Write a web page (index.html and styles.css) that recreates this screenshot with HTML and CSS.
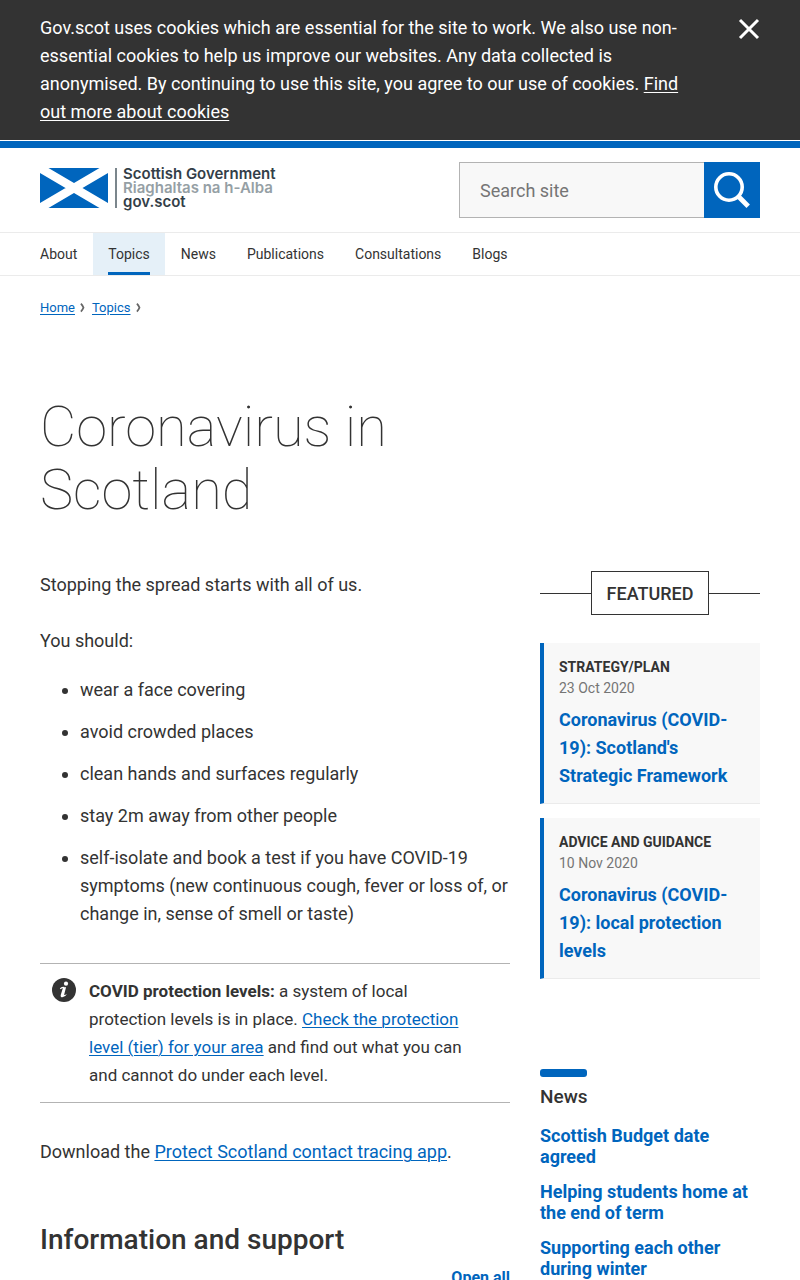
FILE: index.html
```html
<!DOCTYPE html>
<html lang="en">
<head>
<meta charset="utf-8">
<meta name="viewport" content="width=device-width, initial-scale=1">
<title>Coronavirus in Scotland - gov.scot</title>
<link rel="stylesheet" href="styles.css">
</head>
<body>
<div class="cookie-notice">
  <div class="wrapper cookie-inner">
    <p class="cookie-text">Gov.scot uses cookies which are essential for the site to work. We also use non-essential cookies to help us improve our websites. Any data collected is anonymised. By continuing to use this site, you agree to our use of cookies. <a href="#cookies">Find out more about cookies</a></p>
    <button class="cookie-close" type="button" aria-label="Close cookie notice">
      <svg width="22" height="22" viewBox="0 0 22 22" aria-hidden="true"><path d="M2 2L20 20M20 2L2 20" stroke="#fff" stroke-width="3" fill="none"/></svg>
    </button>
  </div>
</div>
<header class="site-header">
  <div class="wrapper header-inner">
    <a class="logo" href="#home">
      <svg class="flag" width="68" height="40" viewBox="0 0 68 40" aria-hidden="true">
        <rect width="68" height="40" fill="#0065bd"/>
        <path d="M0 0L68 40M68 0L0 40" stroke="#fff" stroke-width="8.6"/>
      </svg>
      <span class="logo-text">
        <span>Scottish Government</span>
        <span class="gaelic">Riaghaltas na h-Alba</span>
        <span>gov.scot</span>
      </span>
    </a>
    <form class="search" role="search">
      <input class="search-input" type="search" placeholder="Search site" aria-label="Search site">
      <button class="search-button" type="submit" aria-label="Search">
        <svg width="56" height="56" viewBox="0 0 56 56" aria-hidden="true"><circle cx="25" cy="25" r="13.2" fill="none" stroke="#fff" stroke-width="3.6"/><path d="M34 34L44.2 44.2" stroke="#fff" stroke-width="4.8"/></svg>
      </button>
    </form>
  </div>
  <nav class="main-nav" aria-label="Main">
    <ul class="wrapper nav-list">
      <li><a href="#about">About</a></li>
      <li><a class="current" href="#topics"><span>Topics</span></a></li>
      <li><a href="#news">News</a></li>
      <li><a href="#publications">Publications</a></li>
      <li><a href="#consultations">Consultations</a></li>
      <li><a href="#blogs">Blogs</a></li>
    </ul>
  </nav>
</header>
<div class="wrapper">
  <nav aria-label="Breadcrumb">
    <ol class="breadcrumbs">
      <li><a href="#home">Home</a><svg width="5" height="10" viewBox="0 0 5 10" aria-hidden="true"><path d="M0.9 0.7Q2.4 2.2 3.5 4.7Q2.4 7.2 0.9 8.7" fill="none" stroke="#666" stroke-width="1.7"/></svg></li>
      <li><a href="#topics">Topics</a><svg width="5" height="10" viewBox="0 0 5 10" aria-hidden="true"><path d="M0.9 0.7Q2.4 2.2 3.5 4.7Q2.4 7.2 0.9 8.7" fill="none" stroke="#666" stroke-width="1.7"/></svg></li>
    </ol>
  </nav>
  <div class="layout">
    <h1>Coronavirus in Scotland</h1>
    <main class="content">
      <p>Stopping the spread starts with all of us.</p>
      <p>You should:</p>
      <ul class="advice">
        <li>wear a face covering</li>
        <li>avoid crowded places</li>
        <li>clean hands and surfaces regularly</li>
        <li>stay 2m away from other people</li>
        <li>self-isolate and book a test if you have COVID-19 symptoms (new continuous cough, fever or loss of, or change in, sense of smell or taste)</li>
      </ul>
      <div class="info-note">
        <svg class="info-icon" width="24" height="24" viewBox="0 0 24 24" aria-hidden="true"><circle cx="12" cy="12" r="12" fill="#333"/><circle cx="14" cy="5.7" r="2.1" fill="#fff"/><path d="M8.2 10.7C9.8 9.6 11.4 9.3 12.6 9.5" fill="none" stroke="#fff" stroke-width="1.2"/><path d="M10.9 10L14.1 9L12.2 16.4Q12 17.6 15 16Q13 19.3 10.4 19.3Q8.1 19.2 8.8 16.7Z" fill="#fff"/></svg>
        <p><strong>COVID protection levels:</strong> a system of local protection levels is in place. <a href="#levels">Check the protection level (tier) for your area</a> and find out what you can and cannot do under each level.</p>
      </div>
      <p class="download">Download the <a href="#app">Protect Scotland contact tracing app</a>.</p>
      <h2>Information and support</h2>
      <button class="open-all" type="button">Open all</button>
    </main>
    <aside class="sidebar">
      <h2 class="featured-title"><span>Featured</span></h2>
      <article class="card">
        <p class="card-type">Strategy/plan</p>
        <p class="card-date">23 Oct 2020</p>
        <h3><a href="#framework">Coronavirus (COVID-19): Scotland's Strategic Framework</a></h3>
      </article>
      <article class="card">
        <p class="card-type">Advice and guidance</p>
        <p class="card-date">10 Nov 2020</p>
        <h3><a href="#local">Coronavirus (COVID-19): local protection levels</a></h3>
      </article>
      <section class="news">
        <h2>News</h2>
        <ul>
          <li><a href="#budget">Scottish Budget date agreed</a></li>
          <li><a href="#students">Helping students home at the end of term</a></li>
          <li><a href="#winter">Supporting each other during winter</a></li>
        </ul>
      </section>
    </aside>
  </div>
</div>
</body>
</html>
```

FILE: styles.css
```css
* { box-sizing: border-box; }
body {
  margin: 0;
  background: #fff;
  color: #333;
  font: 18px/28px Roboto, sans-serif;
}
h1, h2, h3, p, ul, ol { margin: 0; padding: 0; }
a { color: #0065bd; text-underline-offset: 2px; text-decoration-thickness: 1px; }
button { font: inherit; border: 0; padding: 0; cursor: pointer; }
svg { display: block; flex: none; }
.wrapper { padding: 0 40px; }

.cookie-notice {
  background: #333;
  color: #fff;
  padding: 14px 0;
}
.cookie-inner { display: flex; justify-content: space-between; align-items: flex-start; gap: 48px; }
.cookie-text { max-width: 640px; }
.cookie-text a { color: #fff; }
.cookie-close { background: none; padding-top: 4px; }

.site-header { margin-top: 1px; border-top: 7px solid #0065bd; }
.header-inner {
  display: flex;
  justify-content: space-between;
  align-items: center;
  padding-top: 14px;
  padding-bottom: 14px;
}
.logo {
  display: flex;
  gap: 7px;
  align-items: center;
  margin-bottom: 4px;
  text-decoration: none;
}
.logo-text {
  display: flex;
  flex-direction: column;
  color: #333e48;
  font: 600 15px/14px Inter, sans-serif;
  background: linear-gradient(#7b868c, #7b868c) 0 1px / 2px 40px no-repeat;
  padding-left: 8px;
}
.gaelic { color: #95a0a5; }
.search { display: flex; width: 301px; height: 56px; }
.search-input {
  flex: 1;
  min-width: 0;
  border: 1px solid #b3b3b3;
  border-right: 0;
  border-radius: 0;
  background: #f8f8f8;
  color: #333;
  font: 18px/28px Roboto, sans-serif;
  padding: 2px 20px 0;
  appearance: none;
}
.search-input::placeholder { color: #757575; }
.search-button { background: #0065bd; width: 56px; }

.main-nav { border-top: 1px solid #ebebeb; border-bottom: 1px solid #ebebeb; }
.nav-list { display: flex; gap: 1px; list-style: none; padding-left: 25px; }
.nav-list a {
  display: block;
  padding: 0 15px;
  color: #333;
  font-size: 14px;
  line-height: 42px;
  text-decoration: none;
}
.nav-list .current { background: #e5f0f8; }
.current span { display: block; box-shadow: inset 0 -3px #0065bd; }

.breadcrumbs {
  display: flex;
  gap: 7px;
  list-style: none;
  font-size: 13px;
  line-height: 20px;
  padding-top: 22px;
}
.breadcrumbs li { display: flex; align-items: center; gap: 5px; }

.layout {
  display: grid;
  grid-template-columns: minmax(0, 1fr) 220px;
  column-gap: 30px;
  padding-top: 78px;
}
h1 {
  grid-column: 1;
  font-size: 56px;
  line-height: 63px;
  font-weight: 100;
  padding-bottom: 49px;
}
.content { grid-column: 1; }
.content > p { margin-bottom: 28px; }
.content > .advice { margin-top: -7px; padding-left: 40px; }
.advice li { margin-bottom: 14px; }
.info-note {
  display: flex;
  gap: 13px;
  margin-top: 35px;
  padding: 13px 45px 13px 12px;
  border-top: 1px solid #b3b3b3;
  border-bottom: 1px solid #b3b3b3;
  font-size: 17px;
}
.info-icon { margin-top: 1px; }
.content > .download { margin: 35px 0 56px; }
.content h2 { font-size: 28px; line-height: 36px; font-weight: 500; }
.open-all {
  display: block;
  margin: 6px 0 0 auto;
  background: none;
  color: #0065bd;
  font-size: 16px;
  line-height: 28px;
  font-weight: 700;
}

.sidebar { grid-column: 2; }
.featured-title {
  display: flex;
  align-items: center;
  font-size: 18px;
  line-height: 28px;
  font-weight: 500;
  text-transform: uppercase;
  margin-bottom: 28px;
}
.featured-title::before, .featured-title::after { content: ""; flex: 1; border-top: 1px solid #333; }
.featured-title span { border: 1px solid #333; padding: 8px 15px 6px; }
.card {
  background: #f8f8f8;
  border-left: 4px solid #0065bd;
  border-bottom: 1px solid #ebebeb;
  padding: 14px 15px 13px;
  margin-bottom: 14px;
}
.card p { font-size: 14px; line-height: 21px; }
.card .card-type { font-weight: 700; text-transform: uppercase; }
.card-date { color: #757575; }
.card h3 { font-size: 18px; line-height: 28px; margin-top: 7px; }
.card a, .news a { text-decoration: none; }
.news { margin-top: 90px; }
.news::before {
  content: "";
  display: block;
  width: 47px;
  height: 8px;
  border-radius: 3px;
  background: #0065bd;
}
.news h2 { font-size: 19px; line-height: 28px; font-weight: 500; margin: 6px 0 14px; }
.news ul { list-style: none; }
.news li { font-weight: 700; line-height: 21px; margin-bottom: 14px; }
```
